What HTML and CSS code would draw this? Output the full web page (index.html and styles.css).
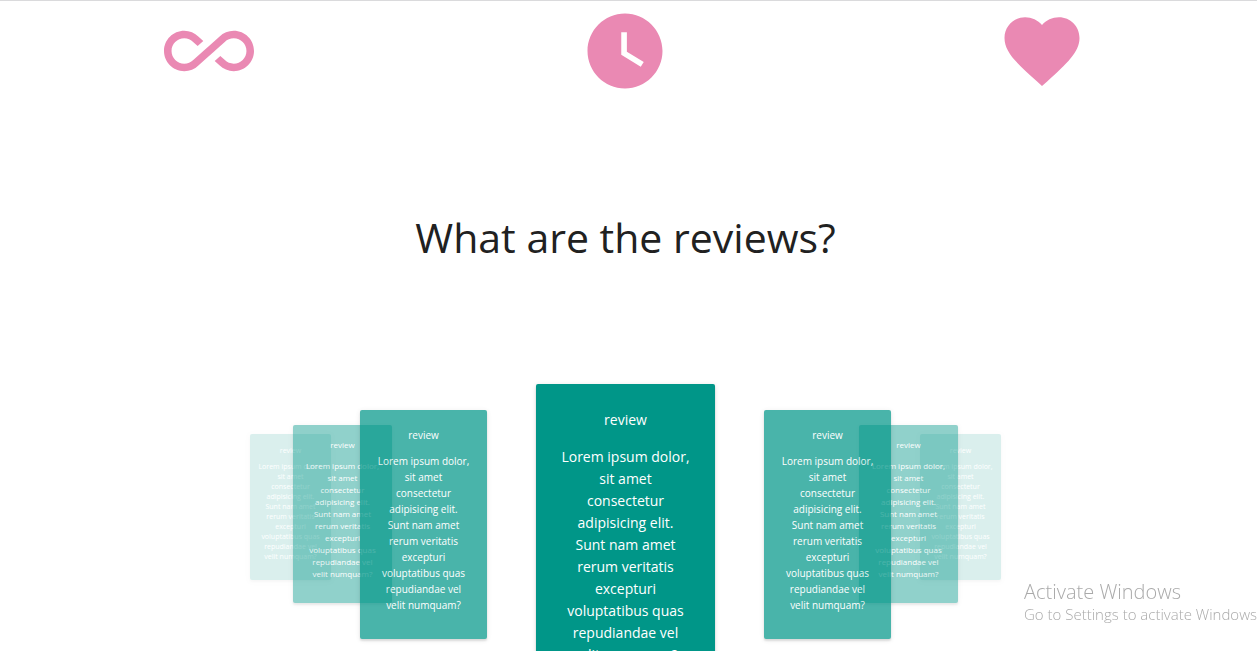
FILE: index.html
```html
<!DOCTYPE html>
<html lang="en">
<head>
<meta charset="utf-8">
<meta name="viewport" content="width=device-width, initial-scale=1">
<title>Reviews</title>
<link rel="stylesheet" href="styles.css">
</head>
<body>
<main class="page">
  <section class="features">
    <svg class="icon" viewBox="0 0 24 24" aria-hidden="true"><path d="M18.6 6.62c-1.44 0-2.8.56-3.77 1.53L12 10.66 10.48 12h.01L7.8 14.39c-.64.64-1.49.99-2.4.99-1.87 0-3.39-1.51-3.39-3.38S3.53 8.62 5.4 8.62c.91 0 1.76.35 2.44 1.03l1.13 1 1.51-1.34L9.22 8.2C8.2 7.18 6.84 6.62 5.4 6.62 2.42 6.62 0 9.04 0 12s2.42 5.38 5.4 5.38c1.44 0 2.8-.56 3.77-1.53l2.83-2.5.01.01L13.52 12h-.01l2.69-2.39c.64-.64 1.49-.99 2.4-.99 1.87 0 3.39 1.51 3.39 3.38s-1.52 3.38-3.39 3.38c-.9 0-1.76-.35-2.44-1.03l-1.14-1.01-1.51 1.34 1.27 1.12c1.02 1.01 2.37 1.57 3.82 1.57 2.98 0 5.4-2.41 5.4-5.38s-2.42-5.37-5.4-5.37z"/></svg>
    <svg class="icon" viewBox="0 0 24 24" aria-hidden="true"><path d="M12 2C6.5 2 2 6.5 2 12s4.5 10 10 10 10-4.5 10-10S17.5 2 12 2zm4.2 14.2L11 13V7h1.5v5.2l4.5 2.7-.8 1.3z"/></svg>
    <svg class="icon" viewBox="0 0 24 24" aria-hidden="true"><path d="M12 21.35l-1.45-1.32C5.4 15.36 2 12.28 2 8.5 2 5.42 4.42 3 7.5 3c1.74 0 3.41.81 4.5 2.09C13.09 3.81 14.76 3 16.5 3 19.58 3 22 5.42 22 8.5c0 3.78-3.4 6.86-8.55 11.54L12 21.35z"/></svg>
  </section>
  <h1 class="title">What are the reviews?</h1>
  <section class="carousel">
    <article class="card far">
      <p>review</p>
      <p>Lorem ipsum dolor,<br>sit amet<br>consectetur<br>adipisicing elit.<br>Sunt nam amet<br>rerum veritatis<br>excepturi<br>voluptatibus quas<br>repudiandae vel<br>velit numquam?</p>
    </article>
    <article class="card mid">
      <p>review</p>
      <p>Lorem ipsum dolor,<br>sit amet<br>consectetur<br>adipisicing elit.<br>Sunt nam amet<br>rerum veritatis<br>excepturi<br>voluptatibus quas<br>repudiandae vel<br>velit numquam?</p>
    </article>
    <article class="card near">
      <p>review</p>
      <p>Lorem ipsum dolor,<br>sit amet<br>consectetur<br>adipisicing elit.<br>Sunt nam amet<br>rerum veritatis<br>excepturi<br>voluptatibus quas<br>repudiandae vel<br>velit numquam?</p>
    </article>
    <article class="card active">
      <p>review</p>
      <p>Lorem ipsum dolor,<br>sit amet<br>consectetur<br>adipisicing elit.<br>Sunt nam amet<br>rerum veritatis<br>excepturi<br>voluptatibus quas<br>repudiandae vel<br>velit numquam?</p>
    </article>
    <article class="card near">
      <p>review</p>
      <p>Lorem ipsum dolor,<br>sit amet<br>consectetur<br>adipisicing elit.<br>Sunt nam amet<br>rerum veritatis<br>excepturi<br>voluptatibus quas<br>repudiandae vel<br>velit numquam?</p>
    </article>
    <article class="card mid">
      <p>review</p>
      <p>Lorem ipsum dolor,<br>sit amet<br>consectetur<br>adipisicing elit.<br>Sunt nam amet<br>rerum veritatis<br>excepturi<br>voluptatibus quas<br>repudiandae vel<br>velit numquam?</p>
    </article>
    <article class="card far">
      <p>review</p>
      <p>Lorem ipsum dolor,<br>sit amet<br>consectetur<br>adipisicing elit.<br>Sunt nam amet<br>rerum veritatis<br>excepturi<br>voluptatibus quas<br>repudiandae vel<br>velit numquam?</p>
    </article>
  </section>
</main>
<aside class="watermark">
  <p class="watermark-title">Activate Windows</p>
  <p class="watermark-text">Go to Settings to activate Windows</p>
</aside>
</body>
</html>
```

FILE: styles.css
```css
* {
  box-sizing: border-box;
}

body {
  margin: 0;
  height: 100vh;
  overflow: hidden;
  background: #fff;
  color: #212121;
  font-family: "Segoe UI", "Open Sans", "Noto Sans", sans-serif;
}

p {
  margin: 0;
}

.page {
  border-top: 1px solid #dadadc;
  padding-right: 6px;
}

.features {
  display: grid;
  grid-template-columns: repeat(3, 1fr);
  justify-items: center;
  padding: 5px 1px 0;
}

.icon {
  width: 90px;
  height: 90px;
  fill: #ea89b3;
}

.title {
  margin: 111px 0 0;
  font-size: 41px;
  font-weight: 400;
  line-height: 60px;
  text-align: center;
}

.carousel {
  display: flex;
  justify-content: center;
  align-items: flex-start;
  margin-top: 117px;
}

.card {
  position: relative;
  flex: none;
  display: flex;
  flex-direction: column;
  align-items: center;
  border-radius: 2px;
  background: #009688;
  box-shadow: 0 2px 2px rgba(0, 0, 0, 0.14), 0 1px 5px rgba(0, 0, 0, 0.12);
  color: #fff;
  text-align: center;
  white-space: nowrap;
}

.active {
  z-index: 4;
  width: 179px;
  height: 320px;
  margin: 0 49px;
  padding-top: 25px;
  gap: 15px;
  font-size: 14px;
  line-height: 22px;
}

.near {
  z-index: 3;
  width: 127px;
  height: 229px;
  margin-top: 26px;
  padding-top: 17px;
  gap: 10px;
  font-size: 10px;
  line-height: 16px;
  opacity: 0.71;
}

.mid {
  z-index: 2;
  width: 99px;
  height: 178px;
  margin: 41px -32px 0;
  padding-top: 14px;
  gap: 9px;
  font-size: 8px;
  line-height: 12px;
  opacity: 0.43;
}

.far {
  z-index: 1;
  width: 81px;
  height: 146px;
  margin: 50px -6px 0;
  padding-top: 12px;
  gap: 6px;
  font-size: 7px;
  line-height: 10px;
  opacity: 0.14;
}

.watermark {
  position: fixed;
  right: 0;
  bottom: 27px;
  z-index: 5;
  color: #aaa;
  font-weight: 300;
  white-space: nowrap;
}

.watermark-title {
  font-size: 20px;
  line-height: 24px;
}

.watermark-text {
  font-size: 15px;
  line-height: 20px;
}
```
